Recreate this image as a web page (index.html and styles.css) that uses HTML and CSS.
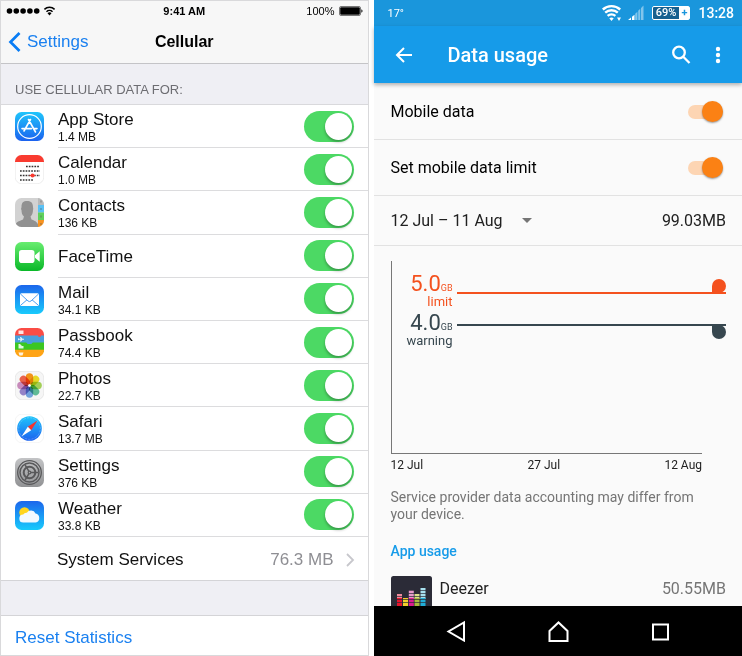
FILE: index.html
```
<!DOCTYPE html>
<html lang="en">
<head>
    <meta charset="utf-8">
    <meta name="viewport" content="width=device-width, initial-scale=1">
    <title>Cellular / Data usage</title>
    <link rel="stylesheet" href="styles.css">
</head>
<body>
    <main class="phones">
        <!-- iOS -->
        <section class="ios">
            <div class="ios-status">
                <div class="ios-signal">
                    <svg width="50" height="12" viewBox="0 0 50 12">
                        <circle cx="3.5" cy="6" r="2.8"/><circle cx="10.3" cy="6" r="2.8"/><circle cx="17.1" cy="6" r="2.8"/><circle cx="23.9" cy="6" r="2.8"/><circle cx="30.7" cy="6" r="2.8"/>
                        <g fill="none" stroke="#000" stroke-width="1.5"><path d="M38.400 4.400a7.300 7.300 0 0 1 10.200 0M40.500 6.700a4.300 4.300 0 0 1 6 0"/></g>
                        <path d="M43.500 10.400l-2-2.200a3 3 0 0 1 4 0z"/>
                    </svg>
                </div>
                <strong>9:41 AM</strong>
                <div class="ios-battery">
                    100%
                    <svg width="24" height="10" viewBox="0 0 24 10">
                        <rect x=".5" y=".5" width="21" height="9" rx="1.5" fill="#fff" stroke="#777"/>
                        <rect x="1.2" y="1.2" width="19.6" height="7.6" rx="1"/>
                        <path d="M22.4 3.2a2 2 0 0 1 0 3.6z"/>
                    </svg>
                </div>
            </div>
            <header class="ios-nav">
                <a class="ios-back" href="#">
                    <svg width="13" height="20" viewBox="0 0 13 20"><path d="M11.500 1L2.500 10l9 9" fill="none" stroke="#087cf5" stroke-width="2.7"/></svg>
                    Settings
                </a>
                <h1>Cellular</h1>
            </header>
            <h2 class="ios-label">USE CELLULAR DATA FOR:</h2>
            <ul class="ios-list">
                <li>
                    <svg class="app-icon" viewBox="0 0 29 29">
                        <defs><linearGradient id="blue" x2="0" y2="1"><stop stop-color="#1fc5fb"/><stop offset="1" stop-color="#1b62ef"/></linearGradient></defs>
                        <rect width="29" height="29" rx="6.5" fill="url(#blue)"/>
                        <g fill="none" stroke="#fff"><circle cx="14.5" cy="14.5" r="11.8" stroke-width="1.2"/><path d="M15.5 7.5L9 19M13.5 7.5L20.5 20M7 16.6h9.5M19 16.600h3" stroke-width="1.6" stroke-linecap="round"/></g>
                    </svg>
                    <div class="ios-row">
                        <label for="app-store">App Store <small>1.4 MB</small></label>
                        <input class="ios-toggle" id="app-store" type="checkbox" checked>
                    </div>
                </li>
                <li>
                    <svg class="app-icon" viewBox="0 0 29 29">
                        <rect x=".3" y=".3" width="28.4" height="28.4" rx="6.3" fill="#fff" stroke="#e3e3e3" stroke-width=".6"/>
                        <path d="M0 7V6.5A6.5 6.5 0 0 1 6.5 0h16A6.5 6.5 0 0 1 29 6.5V7z" fill="#f93b30"/>
                        <g stroke="#333" stroke-width="1.6" stroke-dasharray="1.7 1.1"><path d="M11 11.500h14M5 16h20M5 20.500h20M5 25h13"/></g>
                        <path d="M14.500 20.500h6" stroke="#f93b30"/><circle cx="17.500" cy="20.500" r="2" fill="#f93b30"/>
                    </svg>
                    <div class="ios-row">
                        <label for="calendar">Calendar <small>1.0 MB</small></label>
                        <input class="ios-toggle" id="calendar" type="checkbox" checked>
                    </div>
                </li>
                <li>
                    <svg class="app-icon" viewBox="0 0 29 29">
                        <defs><clipPath id="tile"><rect width="29" height="29" rx="6.5"/></clipPath></defs>
                        <g clip-path="url(#tile)">
                            <path fill="#d2d2d2" d="M0 0h29v29H0z"/>
                            <path fill="#919191" d="M0 29c0-4.500 3-5.500 8-7.500l1-3c-2-1.500-2.500-4-2.500-6.500-1-1 0-2 0-3C6.500 4.500 8.500 3 12 3s6 1.500 6 6c0 1 .6 2 0 3 0 2.500-.8 5-2.500 6.500l1 3c4 1.500 7 3 7 7.500z"/>
                            <path fill="#b9b9b9" d="M23 0h6v7h-6z"/><path fill="#5ac1f5" d="M23 7h6v7.500h-6z"/><path fill="#5fd15c" d="M23 14.500h6V22h-6z"/><path fill="#f8931f" d="M23 22h6v7h-6z"/>
                            <path d="M26 2.500v25" stroke="#555" stroke-opacity=".4" stroke-width="1.500" stroke-dasharray="2 5.500"/>
                        </g>
                    </svg>
                    <div class="ios-row">
                        <label for="contacts">Contacts <small>136 KB</small></label>
                        <input class="ios-toggle" id="contacts" type="checkbox" checked>
                    </div>
                </li>
                <li>
                    <svg class="app-icon" viewBox="0 0 29 29">
                        <defs><linearGradient id="green" x2="0" y2="1"><stop stop-color="#68ed70"/><stop offset="1" stop-color="#0ab828"/></linearGradient></defs>
                        <rect width="29" height="29" rx="6.5" fill="url(#green)"/>
                        <rect x="4" y="8" width="15.5" height="13" rx="2.8" fill="#fff"/><path d="M20 13.200l4.700-4v10.600l-4.700-4z" fill="#fff"/>
                    </svg>
                    <div class="ios-row">
                        <label for="facetime">FaceTime</label>
                        <input class="ios-toggle" id="facetime" type="checkbox" checked>
                    </div>
                </li>
                <li>
                    <svg class="app-icon" viewBox="0 0 29 29">
                        <defs><linearGradient id="mail-bg" x2="0" y2="1"><stop stop-color="#1c66ec"/><stop offset="1" stop-color="#18cbfc"/></linearGradient></defs>
                        <rect width="29" height="29" rx="6.5" fill="url(#mail-bg)"/>
                        <rect x="5" y="8.3" width="19" height="12.6" rx="1.5" fill="#fff"/>
                        <path d="M5.500 9l7.500 7q1.500 1.200 3 0l7.500-7M5.500 20.400l6.500-5.600M23.500 20.400L17 14.800" fill="none" stroke="#3b94ef" stroke-width=".9"/>
                    </svg>
                    <div class="ios-row">
                        <label for="mail">Mail <small>34.1 KB</small></label>
                        <input class="ios-toggle" id="mail" type="checkbox" checked>
                    </div>
                </li>
                <li>
                    <svg class="app-icon" viewBox="0 0 29 29">
                        <g clip-path="url(#tile)">
                            <path fill="#fa4c45" d="M0 0h29v9H0z"/>
                            <path fill="#4a9fdb" d="M0 7.500h23a1.500 1.500 0 0 0 3 0h3V16H0z"/>
                            <path fill="#3bc723" d="M0 14.500h11q1 0 1.500 1.500h4q.5-1.500 1.500-1.500h11V24H0z"/>
                            <path fill="#ffa416" d="M0 21.800h29V29H0z"/>
                            <g fill="#fff" fill-opacity=".85"><path d="M3.500 2.500h5V6h-5zM3 10l1 .7h1.500L5 9h1l1.500 1.700H9v1H7.500L6 13.500H5l.5-1.800H4l-1 .7zM3.500 16h2v1h1v1h2v2.500h-5zM3.500 24.500h5l-1 3h-3z"/></g>
                        </g>
                    </svg>
                    <div class="ios-row">
                        <label for="passbook">Passbook <small>74.4 KB</small></label>
                        <input class="ios-toggle" id="passbook" type="checkbox" checked>
                    </div>
                </li>
                <li>
                    <svg class="app-icon photos-icon" viewBox="0 0 29 29">
                        <rect x=".3" y=".3" width="28.4" height="28.4" rx="6.3" fill="#f6f6f6" stroke="#ddd" stroke-width=".6"/>
                        <rect x="10.8" y="2.2" width="7.4" height="11.4" rx="3.7" fill="#fa9a1b"/>
                        <rect x="10.8" y="2.2" width="7.4" height="11.4" rx="3.7" fill="#f0e028" transform="rotate(45 14.5 14.5)"/>
                        <rect x="10.8" y="2.2" width="7.4" height="11.4" rx="3.7" fill="#a9d75a" transform="rotate(90 14.5 14.5)"/>
                        <rect x="10.8" y="2.2" width="7.4" height="11.4" rx="3.7" fill="#62c29c" transform="rotate(135 14.5 14.5)"/>
                        <rect x="10.8" y="2.2" width="7.4" height="11.4" rx="3.7" fill="#76a9e4" transform="rotate(180 14.5 14.5)"/>
                        <rect x="10.8" y="2.2" width="7.4" height="11.4" rx="3.7" fill="#9a88cf" transform="rotate(225 14.5 14.5)"/>
                        <rect x="10.8" y="2.2" width="7.4" height="11.4" rx="3.7" fill="#cf90c2" transform="rotate(270 14.5 14.5)"/>
                        <rect x="10.8" y="2.2" width="7.4" height="11.4" rx="3.7" fill="#f2664f" transform="rotate(315 14.5 14.5)"/>
                        <circle cx="14.5" cy="14.5" r="1.3" fill="#fff"/>
                    </svg>
                    <div class="ios-row">
                        <label for="photos">Photos <small>22.7 KB</small></label>
                        <input class="ios-toggle" id="photos" type="checkbox" checked>
                    </div>
                </li>
                <li>
                    <svg class="app-icon" viewBox="0 0 29 29">
                        <rect x=".3" y=".3" width="28.4" height="28.4" rx="6.3" fill="#fff" stroke="#eee" stroke-width=".6"/>
                        <circle cx="14.5" cy="14.5" r="12.3" fill="url(#blue)"/>
                        <circle cx="14.5" cy="14.5" r="10.8" fill="none" stroke="#fff" stroke-opacity=".5" stroke-dasharray=".5 1"/>
                        <path d="M22.500 6.500L12.800 12.800l3.400 3.400z" fill="#f4332c"/><path d="M6.500 22.500l6.300-9.700 3.400 3.400z" fill="#fff"/>
                    </svg>
                    <div class="ios-row">
                        <label for="safari">Safari <small>13.7 MB</small></label>
                        <input class="ios-toggle" id="safari" type="checkbox" checked>
                    </div>
                </li>
                <li>
                    <svg class="app-icon" viewBox="0 0 29 29">
                        <defs><linearGradient id="grey" x2="0" y2="1"><stop stop-color="#c3c4c6"/><stop offset="1" stop-color="#919294"/></linearGradient></defs>
                        <rect width="29" height="29" rx="6.5" fill="url(#grey)"/>
                        <g fill="none" stroke="#58585a">
                            <circle cx="14.5" cy="14.5" r="11.8" stroke-width="1.300"/>
                            <circle cx="14.5" cy="14.5" r="9.5" stroke-width="1.500"/>
                            <circle cx="14.5" cy="14.5" r="5.8" stroke-width="2"/>
                            <circle cx="14.5" cy="14.5" r="1.300" stroke-width="1.200"/>
                            <path d="M16 14.500h7M13.800 13.200l-3.600-6.100M13.800 15.800l-3.600 6.100" stroke-width="1.500"/>
                        </g>
                    </svg>
                    <div class="ios-row">
                        <label for="settings">Settings <small>376 KB</small></label>
                        <input class="ios-toggle" id="settings" type="checkbox" checked>
                    </div>
                </li>
                <li>
                    <svg class="app-icon" viewBox="0 0 29 29">
                        <rect width="29" height="29" rx="6.5" fill="url(#mail-bg)"/>
                        <circle cx="9.5" cy="11.5" r="5.2" fill="#ffd51e"/>
                        <path d="M8.500 21.500a4 4 0 0 1-.3-8 3.800 3.800 0 0 1 3.600-1.800 5 5 0 0 1 8.700.8 4.600 4.600 0 0 1 .2 9z" fill="#f3f9ff"/>
                    </svg>
                    <div class="ios-row">
                        <label for="weather">Weather <small>33.8 KB</small></label>
                        <input class="ios-toggle" id="weather" type="checkbox" checked>
                    </div>
                </li>
                <li>
                    <a class="ios-services" href="#">
                        System Services
                        <span>76.3 MB</span>
                        <svg width="9" height="14" viewBox="0 0 9 14"><path d="M1 1l6 6-6 6" fill="none" stroke="#c7c7cc" stroke-width="1.8"/></svg>
                    </a>
                </li>
            </ul>
            <div class="ios-gap"></div>
            <button class="ios-reset" type="button">Reset Statistics</button>
        </section>

        <!-- Android -->
        <section class="android">
            <div class="android-status">
                <span class="temperature">17°</span>
                <svg width="20" height="18" viewBox="0 0 20 18">
                    <g fill="none" stroke="#fff" stroke-width="2.4"><path d="M.8 5.500a13 13 0 0 1 17.400 0M3.200 8.700a9.500 9.500 0 0 1 12.600 0M5.600 11.800a6 6 0 0 1 7.800 0"/></g>
                    <path d="M9.500 17l-2.200-2.700a3.500 3.500 0 0 1 4.400 0zM15 13.500h4L17 17z" fill="#fff"/>
                </svg>
                <svg class="cell-signal" width="16" height="16" viewBox="0 0 16 16">
                    <path d="M0 15l3-2.500V15zM4 11.800l2.500-2V15H4z" fill="#fff"/>
                    <path d="M7.200 8.800l2.200-2V15H7.200zM10.200 5.700l2-2V15h-2zM13 3l2.500-2.500V15H13z" fill="#fff" fill-opacity=".45"/>
                </svg>
                <span class="android-battery"><b>69%</b><i>+</i></span>
                <time>13:28</time>
            </div>
            <header class="android-bar">
                <button type="button" aria-label="Back">
                    <svg width="18" height="18" viewBox="0 0 18 18"><path d="M17 9H2M9 2L2 9l7 7" fill="none" stroke="#fff" stroke-width="2"/></svg>
                </button>
                <h1>Data usage</h1>
                <button type="button" aria-label="Search">
                    <svg width="20" height="20" viewBox="0 0 20 20"><g fill="none" stroke="#fff" stroke-width="2.3"><circle cx="8" cy="7.500" r="5.800"/><path d="M12 11.500l6.500 6.500"/></g></svg>
                </button>
                <button type="button" aria-label="More options">
                    <svg width="6" height="18" viewBox="0 0 6 18" fill="#fff"><circle cx="3" cy="3" r="2.2"/><circle cx="3" cy="9" r="2.2"/><circle cx="3" cy="15" r="2.2"/></svg>
                </button>
            </header>
            <div class="android-content">
                <div class="android-row">
                    <label for="mobile-data">Mobile data</label>
                    <input class="android-toggle" id="mobile-data" type="checkbox" checked>
                </div>
                <div class="android-row">
                    <label for="data-limit">Set mobile data limit</label>
                    <input class="android-toggle" id="data-limit" type="checkbox" checked>
                </div>
                <div class="android-row period">
                    <div class="period-select">
                        <select aria-label="Period"><option>12 Jul – 11 Aug</option></select>
                    </div>
                    <span>99.03MB</span>
                </div>
                <div class="chart">
                    <div class="chart-line limit">
                        <div class="chart-label"><b>5.0</b><small>GB</small><br>limit</div>
                        <div class="chart-rule"></div>
                    </div>
                    <div class="chart-line warning">
                        <div class="chart-label"><b>4.0</b><small>GB</small><br>warning</div>
                        <div class="chart-rule"></div>
                    </div>
                </div>
                <div class="chart-dates"><span>12 Jul</span><span>27 Jul</span><span>12 Aug</span></div>
                <p class="note">Service provider data accounting may differ from your device.</p>
                <h2 class="usage-title">App usage</h2>
                <div class="usage-app">
                    <svg width="41" height="41" viewBox="0 0 41 41">
                        <rect width="41" height="41" rx="2.5" fill="#2b2b37"/>
                        <g stroke-width="5" fill="none">
                            <path d="M8.500 18v5" stroke="#f08a9c"/><path d="M8.500 22v8" stroke="#e5142c"/>
                            <path d="M14.500 22v8" stroke="#f1ce2b"/>
                            <path d="M20.300 14v9" stroke="#e79ac9"/><path d="M20.300 22v8" stroke="#dc1a90"/>
                            <path d="M26 18v5" stroke="#dbe08a"/><path d="M26 22v8" stroke="#a9b93d"/>
                            <path d="M32 12v11" stroke="#a8e0ef"/><path d="M32 22v8" stroke="#21add6"/>
                        </g>
                        <path d="M5 14.500h30M5 17.500h30M5 20.500h30M5 23.500h30M5 26.500h30" stroke="#2b2b37" stroke-width=".7"/>
                    </svg>
                    <span>Deezer</span>
                    <span class="used">50.55MB</span>
                </div>
            </div>
            <nav class="android-nav">
                <button type="button" aria-label="Back"><svg width="22" height="22" viewBox="0 0 22 22"><path d="M19 2.500v18L3.500 11.500z"/></svg></button>
                <button type="button" aria-label="Home"><svg width="22" height="22" viewBox="0 0 22 22"><path d="M2.500 21V11l9-8.500 9 8.500v10z"/></svg></button>
                <button type="button" aria-label="Recent apps"><svg width="22" height="22" viewBox="0 0 22 22"><path d="M4 4.500h15v15H4z"/></svg></button>
            </nav>
        </section>
    </main>
</body>
</html>
```
FILE: styles.css
```
* {
    box-sizing: border-box;
}

body {
    margin: 0;
    background: #fff;
}

h1, h2, p, ul {
    margin: 0;
    padding: 0;
}

button {
    padding: 0;
    border: 0;
    background: none;
    cursor: pointer;
}

svg {
    display: block;
    flex: none;
}

.phones {
    display: grid;
    grid-template-columns: 1fr 1fr;
    gap: 5px;
    min-height: 100vh;
}

/* iOS */
.ios {
    display: flex;
    flex-direction: column;
    border: 1px solid #d9d9db;
    font-family: "Liberation Sans", Arial, sans-serif;
    font-size: 17px;
    color: #111;
}

.ios-status {
    display: grid;
    grid-template-columns: 1fr auto 1fr;
    align-items: center;
    height: 19px;
    padding: 0 5px;
    background: #f7f7f7;
    font-size: 11px;
    color: #000;
}

.ios-battery {
    display: flex;
    align-items: center;
    justify-content: flex-end;
    gap: 4px;
}

.ios-nav {
    display: grid;
    grid-template-columns: 1fr auto 1fr;
    align-items: center;
    height: 44px;
    padding: 0 7px;
    background: #f7f7f7;
    border-bottom: 1px solid #c4c4c7;
}

.ios-nav h1 {
    font-size: 16px;
    color: #000;
}

.ios-back {
    display: flex;
    align-items: center;
    gap: 6px;
    color: #1a80f0;
    text-decoration: none;
}

.ios-label {
    height: 41px;
    padding: 18px 14px 0;
    background: #efeff4;
    border-bottom: 1px solid #d9d9dc;
    font-size: 13px;
    line-height: 16px;
    font-weight: normal;
    color: #6d6d72;
}

.ios-list {
    flex: 1;
    display: flex;
    flex-direction: column;
    list-style: none;
}

.ios-list li {
    flex: 1 0 43px;
    display: flex;
    align-items: center;
    gap: 14px;
    padding-left: 14px;
}

.app-icon {
    width: 29px;
    height: 29px;
}

.photos-icon rect {
    mix-blend-mode: multiply;
}

.ios-row {
    flex: 1;
    align-self: stretch;
    display: flex;
    align-items: center;
    justify-content: space-between;
    padding-right: 14px;
    border-bottom: 1px solid #dcdcde;
}

.ios-row label {
    padding-top: 2px;
    line-height: 20px;
}

.ios-row small {
    display: block;
    font-size: 12px;
    line-height: 14px;
}

.ios-toggle {
    appearance: none;
    width: 50px;
    height: 31px;
    margin: 0;
    padding: 2px;
    border-radius: 16px;
    background: #ddd;
    cursor: pointer;
}

.ios-toggle::before {
    content: "";
    display: block;
    width: 27px;
    height: 27px;
    border-radius: 50%;
    background: #fff;
    box-shadow: 0 2px 3px rgba(0, 0, 0, 0.3);
}

.ios-toggle:checked {
    background: #4cd964;
}

.ios-toggle:checked::before {
    margin-left: auto;
}

.ios-services {
    flex: 1;
    display: flex;
    align-items: center;
    gap: 12px;
    padding: 3px 13px 0 42px;
    color: inherit;
    text-decoration: none;
}

.ios-services span {
    margin-left: auto;
    color: #8e8e93;
}

.ios-gap {
    height: 36px;
    background: #efeff4;
    border: solid #d4d4d7;
    border-width: 1px 0;
}

.ios-reset {
    height: 39px;
    padding: 4px 14px 0;
    font: inherit;
    color: #1a80f0;
    text-align: left;
}

/* Android */
.android {
    display: flex;
    flex-direction: column;
    font-family: Roboto, sans-serif;
    font-size: 16px;
    color: #212121;
}

.android-status {
    display: flex;
    align-items: center;
    height: 26px;
    padding: 0 8px 0 14px;
    background: #1a96dc;
    color: #fff;
}

.temperature {
    margin-right: auto;
    font-size: 11px;
}

.cell-signal {
    margin: 0 8px 0 6px;
}

.android-battery {
    display: flex;
    height: 14px;
    border: 1px solid #fff;
    border-radius: 2px;
    background: #16608f;
    font-size: 11px;
    line-height: 12px;
}

.android-battery b {
    padding: 0 3px;
    font-weight: 500;
}

.android-battery i {
    width: 10px;
    background: #fff;
    color: #1a96dc;
    font-style: normal;
    font-weight: bold;
    text-align: center;
}

.android-status time {
    margin-left: 8px;
    font-size: 14px;
    font-weight: 500;
}

.android-bar {
    display: flex;
    align-items: center;
    height: 57px;
    padding: 0 21px;
    background: #169be9;
    box-shadow: 0 2px 4px rgba(0, 0, 0, 0.3);
    z-index: 1;
}

.android-bar h1 {
    flex: 1;
    margin-left: 35px;
    font-size: 20px;
    font-weight: 500;
    color: #fff;
}

.android-bar button + button {
    margin-left: 24px;
}

.android-content {
    flex: 1 0 0;
    min-height: 523px;
    padding-top: 1px;
    overflow: hidden;
    background: #fafafa;
}

.android-row {
    display: flex;
    align-items: center;
    justify-content: space-between;
    height: 56px;
    padding: 0 19px 0 17px;
    border-bottom: 1px solid #e2e2e2;
    color: #000;
}

.android-toggle {
    appearance: none;
    display: flex;
    align-items: center;
    width: 35px;
    height: 14px;
    margin: 0;
    border-radius: 7px;
    background: #ddd;
    cursor: pointer;
}

.android-toggle::before {
    content: "";
    width: 21px;
    height: 21px;
    border-radius: 50%;
    background: #f5f5f5;
    box-shadow: 0 1px 2px rgba(0, 0, 0, 0.4);
}

.android-toggle:checked {
    background: #fdd5b3;
}

.android-toggle:checked::before {
    margin-left: auto;
    background: #fb8114;
}

.period {
    height: 50px;
    padding-right: 16px;
    color: #212121;
}

.period-select {
    display: flex;
    align-items: center;
    gap: 18px;
}

.period-select::after {
    content: "";
    border: 5px solid transparent;
    border-top-color: #757575;
    border-bottom: 0;
}

.period-select select {
    appearance: none;
    padding: 0;
    border: 0;
    background: none;
    font: inherit;
    color: inherit;
}

.chart {
    display: flex;
    flex-direction: column;
    height: 193px;
    margin: 15px 16px 0 17px;
    padding-top: 12px;
    border-left: 1px solid #777;
}

.chart::after {
    content: "";
    margin: auto 24px 0 0;
    border-bottom: 1px solid #777;
}

.chart-line {
    display: flex;
    gap: 4px;
    height: 39px;
}

.chart-label {
    width: 61px;
    font-size: 13px;
    line-height: 14px;
    text-align: right;
}

.chart-label b {
    font-size: 22px;
    line-height: 22px;
    font-weight: normal;
}

.chart-label small {
    font-size: 9px;
}

.chart-rule {
    flex: 1;
    height: 15px;
    border: 0 solid;
}

.chart-rule::after {
    content: "";
    display: block;
    width: 14px;
    height: 14px;
    margin-left: auto;
    background: currentColor;
}

.limit {
    color: #f4511e;
}

.limit .chart-rule {
    margin-top: 6px;
    border-bottom-width: 2px;
}

.limit .chart-rule::after {
    border-radius: 50% 50% 50% 0;
}

.warning {
    color: #37474f;
}

.warning .chart-rule {
    margin-top: 12px;
    border-top-width: 2px;
}

.warning .chart-rule::after {
    margin-top: -1px;
    border-radius: 0 50% 50% 50%;
}

.chart-dates {
    display: flex;
    justify-content: space-between;
    margin: 3px 40px 0 17px;
    font-size: 12px;
    line-height: 16px;
}

.note {
    margin: 16px 40px 0 17px;
    font-size: 14px;
    line-height: 17px;
    color: #757575;
}

.usage-title {
    margin: 19px 17px 0;
    font-size: 14px;
    line-height: 18px;
    font-weight: 500;
    color: #169be9;
}

.usage-app {
    display: flex;
    gap: 8px;
    margin: 16px 16px 0 17px;
    line-height: 26px;
}

.used {
    margin-left: auto;
    color: #757575;
}

.android-nav {
    display: flex;
    align-items: center;
    justify-content: center;
    gap: 80px;
    height: 50px;
    background: #000;
}

.android-nav path {
    fill: none;
    stroke: #fff;
    stroke-width: 2;
}
```
